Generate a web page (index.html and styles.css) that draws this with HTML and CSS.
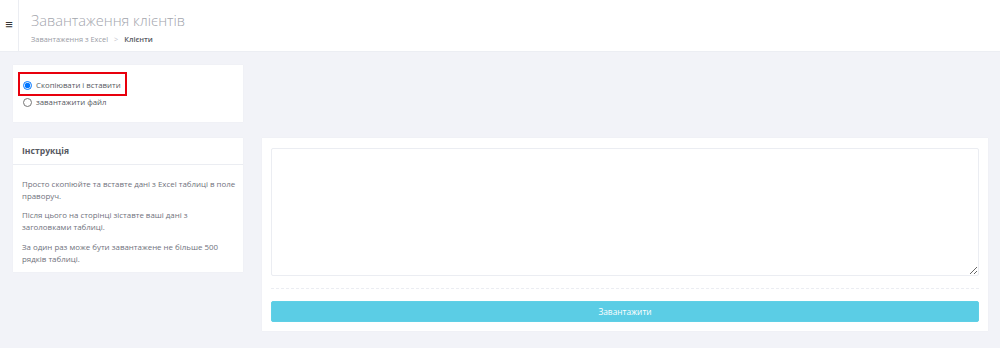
FILE: index.html
```html
<!DOCTYPE html>
<html lang="uk">
<head>
<meta charset="utf-8">
<title>Завантаження клієнтів</title>
<link rel="stylesheet" href="styles.css">
</head>
<body>
<header class="topbar">
  <div class="toggle">≡</div>
  <div class="heading">
    <h1 class="title">Завантаження клієнтів</h1>
    <div class="crumbs"><span class="crumb">Завантаження з Excel</span><span class="sep">&gt;</span><span class="crumb current">Клієнти</span></div>
  </div>
</header>
<main class="content">
  <div class="row">
    <section class="card mode">
      <label class="opt highlighted"><input type="radio" name="m" checked> Скопіювати і вставити</label>
      <label class="opt second"><input type="radio" name="m"> завантажити файл</label>
    </section>
  </div>
  <div class="row main-row">
    <section class="card info">
      <div class="card-head">Інструкція</div>
      <div class="card-body">
        <p>Просто скопіюйте та вставте дані з Excel таблиці в поле праворуч.</p>
        <p>Після цього на сторінці зіставте ваші дані з заголовками таблиці.</p>
        <p>За один раз може бути завантажене не більше 500 рядків таблиці.</p>
      </div>
    </section>
    <section class="card paste">
      <textarea class="area"></textarea>
      <div class="divider"></div>
      <button class="btn">Завантажити</button>
    </section>
  </div>
</main>
</body>
</html>
```
FILE: styles.css
```css
* { box-sizing: border-box; }
html, body { margin: 0; padding: 0; }
body {
  background: #f2f3f8;
  font-family: "Open Sans", "Liberation Sans", sans-serif;
  color: #575962;
  width: 1000px;
  height: 348px;
  overflow: hidden;
}
.topbar {
  height: 52px;
  background: #fff;
  display: flex;
  border-bottom: 1px solid #eceef3;
}
.toggle {
  width: 19px;
  border-right: 1px solid #ebedf2;
  font-size: 13px;
  font-weight: 700;
  color: #333;
  display: flex;
  align-items: center;
  justify-content: center;
  padding-bottom: 4px;
}
.heading { padding: 9px 0 0 12px; }
.title {
  margin: 0;
  font-size: 14.6px;
  font-weight: 300;
  color: #a3a5ad;
  line-height: 22px;
}
.crumbs {
  margin-top: 2px;
  font-size: 7.4px;
  line-height: 12px;
  color: #9a9ca5;
  display: flex;
  gap: 6px;
}
.crumbs .sep { color: #c4c5cd; }
.crumbs .current { color: #575962; font-weight: 600; }
.content {
  padding: 13px 12px 0 13px;
}
.row { display: flex; gap: 19px; }
.main-row { margin-top: 16px; align-items: flex-start; }
.card {
  background: #fff;
  box-shadow: 0 0 1px rgba(0,0,0,0.06);
}
.mode {
  width: 230px;
  height: 57px;
  padding: 7px 5px;
  display: flex;
  flex-direction: column;
  align-items: flex-start;
}
.opt {
  display: flex;
  align-items: center;
  gap: 4px;
  font-size: 7.8px;
  line-height: 12px;
  white-space: nowrap;
  color: #575962;
  padding: 0 3px;
  border: 2px solid transparent;
}
.opt input {
  margin: 0;
  width: 9px;
  height: 9px;
}
.highlighted {
  border-color: #e8000d;
  height: 24px;
  width: 109px;
  padding-top: 2px;
}
.second { margin-top: -2px; }
.info { width: 230px; }
.card-head {
  height: 27px;
  border-bottom: 1px solid #ebedf2;
  padding: 0 9px;
  display: flex;
  align-items: center;
  font-size: 8.6px;
  font-weight: 700;
  color: #575962;
}
.card-body {
  padding: 13px 5px 7px 9px;
  font-size: 7.9px;
  line-height: 12px;
  color: #6f727d;
}
.card-body p { margin: 0 0 7px; }
.card-body p:nth-child(2) { padding-right: 24px; }
.card-body p:last-child { margin: 8px 0 0; padding-right: 10px; }
.paste {
  flex: 1;
  padding: 10px 9px 9px;
  display: flex;
  flex-direction: column;
}
.area {
  height: 128px;
  border: 1px solid #ebedf2;
  border-radius: 2px;
  resize: vertical;
  margin: 0;
  display: block;
  width: 100%;
}
.divider {
  margin: 12px 0 12px;
  border-top: 1px dashed #ebedf2;
}
.btn {
  height: 21px;
  width: 100%;
  border: 1px solid #5fd0e6;
  border-radius: 2px;
  background: #5bcde5;
  color: #fff;
  font-family: inherit;
  font-size: 8.3px;
  padding: 0;
}
```
